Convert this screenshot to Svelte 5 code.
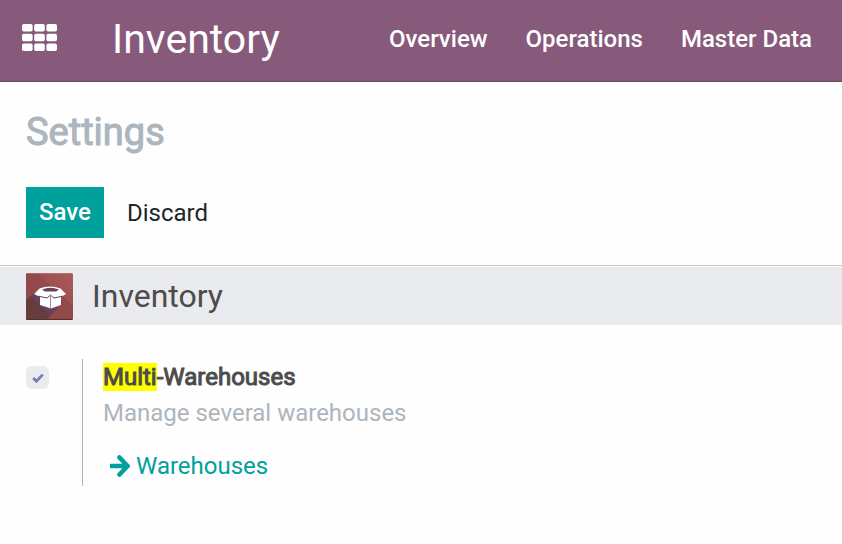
<script lang="ts">
	const menu = ['Overview', 'Operations', 'Master Data'];
	const cells = [0, 1, 2, 3, 4, 5, 6, 7, 8];

	let multiWarehouses = $state(true);
</script>

<svelte:head><title>Settings</title></svelte:head>

<header class="navbar">
	<button class="apps" aria-label="Applications">
		<svg width="35" height="27" viewBox="0 0 35 27" fill="#fff">
			{#each cells as i}
				<rect x={(i % 3) * 12.2} y={Math.floor(i / 3) * 9.7} width="10.6" height="7.6" rx="1.8" />
			{/each}
		</svg>
	</button>
	<a class="brand" href="#inventory">Inventory</a>
	<nav>
		{#each menu as item}
			<a href="#menu">{item}</a>
		{/each}
	</nav>
</header>

<div class="control">
	<h1>Settings</h1>
	<div class="buttons">
		<button class="save">Save</button>
		<button class="discard">Discard</button>
	</div>
</div>

<main>
	<div class="app-head">
		<svg class="logo" width="47" height="47" viewBox="0 0 47 47">
			<defs>
				<linearGradient id="bg" x1="0" y1="1" x2="1" y2="0">
					<stop offset="0" stop-color="#8b4747" />
					<stop offset="1" stop-color="#a95858" />
				</linearGradient>
				<clipPath id="tile"><rect width="47" height="47" rx="2" /></clipPath>
			</defs>
			<g clip-path="url(#tile)">
				<rect width="47" height="47" fill="url(#bg)" />
				<path d="M0 0h11l36 33v14H0z" fill="#934a4b" />
				<path d="M0 27l9-8 28 10-6 7-7 7-4 4H0z" fill="#65415a" />
				<path d="M0 27l5-4 6 8 10 8 3 4-4 4H0z" fill="#673c3d" />
				<path d="M0 0h47v1H0z" fill="#c18383" opacity=".6" />
				<path d="M0 46h47v1H0z" fill="#542f32" />
				<path d="M13.500 15.500Q24 11.500 34.500 15.500L40 21l-5 3v8L25 35.500 14 32v-8l-6-3z" fill="#fff" />
				<path d="M16 16.500Q24 13 33 16.500L30 18.500H19z" fill="#67405a" />
				<path d="M12.500 23.200l8.500 1.800 3.500-3 3.500 3 8.500-1.800" fill="none" stroke="#67405a" stroke-width="1" />
				<path d="M24.500 23v12.500" stroke="#8a6b80" stroke-width=".8" />
			</g>
		</svg>
		<h2>Inventory</h2>
	</div>

	<div class="setting">
		<div class="check">
			<input id="multi" type="checkbox" bind:checked={multiWarehouses} />
			<svg width="12" height="10" viewBox="0 0 12 10" aria-hidden="true">
				<path d="M1.2 5l3.2 3.2L10.8 1.6" fill="none" stroke="#7c7bad" stroke-width="2.8" />
			</svg>
		</div>
		<div class="body">
			<label for="multi"><mark>Multi</mark>-Warehouses</label>
			<p>Manage several warehouses</p>
			<a class="link" href="#warehouses">
				<svg width="20" height="22" viewBox="0 0 20 22" aria-hidden="true">
					<path d="M1.5 11H16M9.5 2.5L17.6 11l-8.1 8.5" fill="none" stroke="#00a09d" stroke-width="4.6" stroke-linecap="round" />
				</svg>
				<span>Warehouses</span>
			</a>
		</div>
	</div>
</main>

<style>
	:global(body) { margin: 0; background: #fefefe; color: #4c4c4c; font-family: Roboto, "Liberation Sans", sans-serif; font-size: 24px; line-height: 36px; }
	h1, h2, p { margin: 0; font-weight: 400; }
	a { text-decoration: none; }
	button { border: 0; padding: 0; background: none; font: inherit; cursor: pointer; }

	.navbar { display: flex; align-items: center; height: 81px; padding: 0 30px 0 22px; background: #875a7b; border-bottom: 1px solid #68465f; }
	.navbar a { color: #fff; white-space: nowrap; }
	.apps, .apps svg { display: block; }
	.apps { margin-bottom: 6px; }
	.brand { margin: 0 auto 4px 55px; font-size: 41px; line-height: 48px; }
	nav { display: flex; gap: 38px; margin-bottom: 4px; font-weight: 500; }

	.control { padding: 26px 26px 27px; border-bottom: 1px solid #c8c9cc; }
	h1 { margin-bottom: 31px; color: #adb5bd; font-size: 38px; line-height: 48px; -webkit-text-stroke: 1px #adb5bd; }
	.buttons { display: flex; gap: 23px; }
	.save { padding: 0 13px; background: #00a09d; color: #fff; font-weight: 500; line-height: 51px; }
	.discard { color: #212529; }

	.app-head { display: flex; align-items: center; gap: 19px; margin-top: 1px; padding: 6px 26px 5px; background: #e9ebee; }
	h2 { font-size: 32px; line-height: 47px; }

	.setting { display: flex; margin: 34px 26px; }
	.check { display: grid; place-items: center; align-self: start; width: 23px; margin: 7px 33px 0 0; }
	.check input, .check svg { grid-area: 1 / 1; }
	.check input { appearance: none; width: 23px; height: 23px; margin: 0; border-radius: 6px; background: #e9ebee; }
	.check svg { pointer-events: none; visibility: hidden; }
	.check input:checked + svg { visibility: visible; }
	.body { padding-left: 20px; border-left: 1px solid #adb5bd; }
	label { display: block; -webkit-text-stroke: 1px #4c4c4c; }
	mark { background: #ff0; color: inherit; }
	p { color: #adb5bd; }
	.link { display: flex; align-items: center; gap: 6px; margin: 17px 0 2px 7px; color: #00a09d; }
</style>
